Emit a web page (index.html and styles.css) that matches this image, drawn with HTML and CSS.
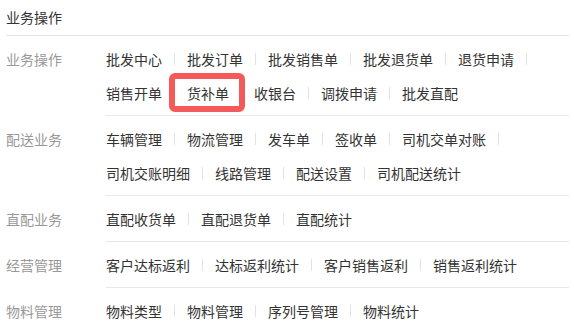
FILE: index.html
```html
<!DOCTYPE html>
<html lang="zh-CN">

<head>
  <meta charset="UTF-8">
  <meta name="viewport" content="width=device-width, initial-scale=1.0">
  <title>业务操作</title>
  <link rel="stylesheet" href="styles.css">
</head>

<body>
  <div class="panel">
    <div class="head">业务操作</div>

    <div class="group">
      <div class="label">业务操作</div>
      <div class="links">
        <a class="link">批发中心</a>
        <a class="link">批发订单</a>
        <a class="link">批发销售单</a>
        <a class="link">批发退货单</a>
        <a class="link">退货申请</a>
        <a class="link">销售开单</a>
        <a class="link marked">货补单</a>
        <a class="link">收银台</a>
        <a class="link">调拨申请</a>
        <a class="link">批发直配</a>
      </div>
    </div>

    <div class="group">
      <div class="label">配送业务</div>
      <div class="links">
        <a class="link">车辆管理</a>
        <a class="link">物流管理</a>
        <a class="link">发车单</a>
        <a class="link">签收单</a>
        <a class="link">司机交单对账</a>
        <a class="link">司机交账明细</a>
        <a class="link">线路管理</a>
        <a class="link">配送设置</a>
        <a class="link">司机配送统计</a>
      </div>
    </div>

    <div class="group">
      <div class="label">直配业务</div>
      <div class="links">
        <a class="link">直配收货单</a>
        <a class="link">直配退货单</a>
        <a class="link">直配统计</a>
      </div>
    </div>

    <div class="group">
      <div class="label">经营管理</div>
      <div class="links">
        <a class="link">客户达标返利</a>
        <a class="link">达标返利统计</a>
        <a class="link">客户销售返利</a>
        <a class="link">销售返利统计</a>
      </div>
    </div>

    <div class="group">
      <div class="label">物料管理</div>
      <div class="links">
        <a class="link">物料类型</a>
        <a class="link">物料管理</a>
        <a class="link">序列号管理</a>
        <a class="link">物料统计</a>
      </div>
    </div>
  </div>
</body>

</html>
```

FILE: styles.css
```css
body {
  margin: 0;
  background: #fff;
  font-family: "Noto Sans CJK SC", "Noto Sans", sans-serif;
  font-size: 14px;
  color: #333;
}

.panel {
  padding: 0 5px 0 6px;
}

.head {
  height: 35px;
  line-height: 35px;
  border-bottom: 1px solid #e4e4e4;
}

.group {
  display: flex;
}

.label {
  width: 100px;
  flex-shrink: 0;
  padding-top: 6px;
  line-height: 34px;
  color: #999;
}

.links {
  flex: 1;
  display: flex;
  flex-wrap: wrap;
  padding: 6px 0 5px;
  border-bottom: 1px solid #e8e8e8;
}

.group:last-child .links {
  border-bottom: none;
}

.link {
  display: flex;
  align-items: center;
  height: 34px;
  color: #333;
  cursor: pointer;
}

.link::after {
  content: '';
  width: 1px;
  height: 12px;
  margin: 0 12px;
  background: #e2e2e2;
}

.link:last-child::after {
  background: transparent;
}

/* 高亮标注 */
.marked {
  position: relative;
  z-index: 0;
}

.marked::before {
  content: '';
  position: absolute;
  left: -18px;
  top: -3px;
  width: 76px;
  height: 39px;
  box-sizing: border-box;
  border: 6px solid #f45a5a;
  border-radius: 6px;
  background: #fff;
  z-index: -1;
}

.marked::after {
  background: transparent;
}
```
